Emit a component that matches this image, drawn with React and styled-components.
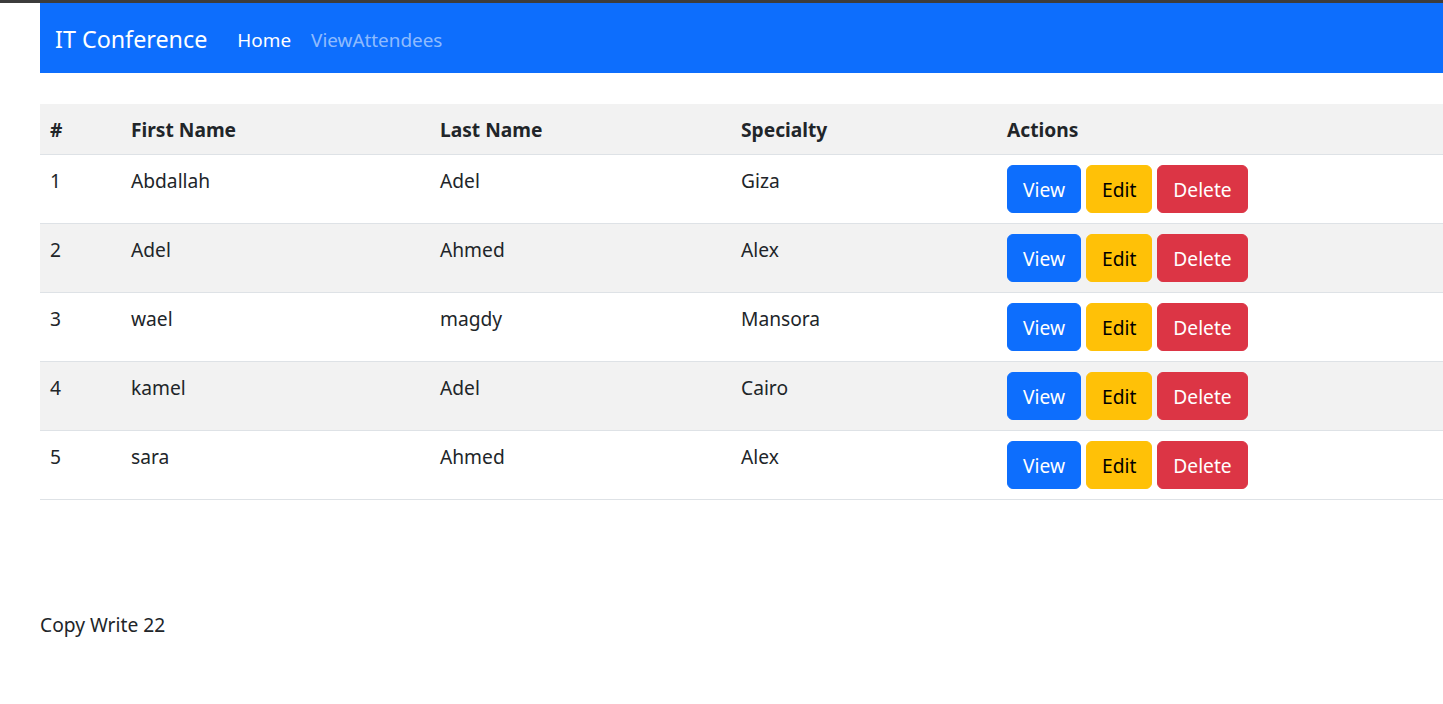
import React from "react";
import styled, { createGlobalStyle } from "styled-components";

const Global = createGlobalStyle`
  html, body { margin: 0; padding: 0; background: #fff; }
  body {
    font-family: "Segoe UI", "Noto Sans", "Open Sans", sans-serif;
    font-size: 19.2px;
    line-height: 30px;
    color: #212529;
    overflow-x: hidden;
  }
  * { box-sizing: border-box; }
`;

const TopStrip = styled.div`
  height: 3px;
  background: #3c3c3c;
`;

const Page = styled.div`
  padding-left: 40px;
`;

const Navbar = styled.nav`
  height: 70px;
  background: #0d6efd;
  display: flex;
  align-items: center;
  padding: 3px 15px 0;
`;

const Brand = styled.a`
  font-size: 23.3px;
  color: #fff;
  margin-right: 20px;
  text-decoration: none;
  line-height: 37px;
`;

const NavLink = styled.a`
  font-size: 18.9px;
  padding: 0 10px;
  text-decoration: none;
  color: ${(p) => (p.$active ? "#fff" : "rgba(255,255,255,0.55)")};
`;

const Table = styled.table`
  width: 100%;
  table-layout: fixed;
  border-collapse: collapse;
  margin-top: 31px;
  vertical-align: top;
`;

const HeadRow = styled.tr`
  background: #f2f2f2;
  border-bottom: 1px solid #dee2e6;
`;

const Th = styled.th`
  text-align: left;
  font-weight: 700;
  padding: 11px 10px 9px;
  line-height: 30px;
`;

const Row = styled.tr`
  background: ${(p) => (p.$striped ? "#f2f2f2" : "#fff")};
  border-bottom: 1px solid #dee2e6;
`;

const Td = styled.td`
  padding: 10px 10px;
  vertical-align: top;
  line-height: 30px;
`;

const TextCell = styled(Td)`
  padding-top: 11px;
`;

const Actions = styled.div`
  display: flex;
  gap: 5px;
`;

const variants = {
  primary: { bg: "#0d6efd", fg: "#fff" },
  warning: { bg: "#ffc107", fg: "#000" },
  danger: { bg: "#dc3545", fg: "#fff" },
};

const Btn = styled.button`
  font-family: inherit;
  font-size: 19.2px;
  line-height: 30px;
  padding: 9px 15px 7px;
  border: 1px solid ${(p) => variants[p.$v].bg};
  background: ${(p) => variants[p.$v].bg};
  color: ${(p) => variants[p.$v].fg};
  border-radius: 6px;
  cursor: pointer;
`;

const Footer = styled.footer`
  margin-top: 110px;
  line-height: 30px;
`;

const rows = [
  ["Abdallah", "Adel", "Giza"],
  ["Adel", "Ahmed", "Alex"],
  ["wael", "magdy", "Mansora"],
  ["kamel", "Adel", "Cairo"],
  ["sara", "Ahmed", "Alex"],
];

export default function App() {
  return (
    <>
      <Global />
      <TopStrip />
      <Page>
        <Navbar>
          <Brand href="#">IT Conference</Brand>
          <NavLink href="#" $active>Home</NavLink>
          <NavLink href="#">ViewAttendees</NavLink>
        </Navbar>
        <Table>
          <colgroup>
            <col style={{ width: 81 }} />
            <col style={{ width: 309 }} />
            <col style={{ width: 301 }} />
            <col style={{ width: 266 }} />
            <col />
          </colgroup>
          <thead>
            <HeadRow>
              <Th>#</Th>
              <Th>First Name</Th>
              <Th>Last Name</Th>
              <Th>Specialty</Th>
              <Th>Actions</Th>
            </HeadRow>
          </thead>
          <tbody>
            {rows.map((r, i) => (
              <Row key={i} $striped={i % 2 === 1}>
                <TextCell>{i + 1}</TextCell>
                <TextCell>{r[0]}</TextCell>
                <TextCell>{r[1]}</TextCell>
                <TextCell>{r[2]}</TextCell>
                <Td>
                  <Actions>
                    <Btn $v="primary">View</Btn>
                    <Btn $v="warning">Edit</Btn>
                    <Btn $v="danger">Delete</Btn>
                  </Actions>
                </Td>
              </Row>
            ))}
          </tbody>
        </Table>
        <Footer>Copy Write 22</Footer>
      </Page>
    </>
  );
}
